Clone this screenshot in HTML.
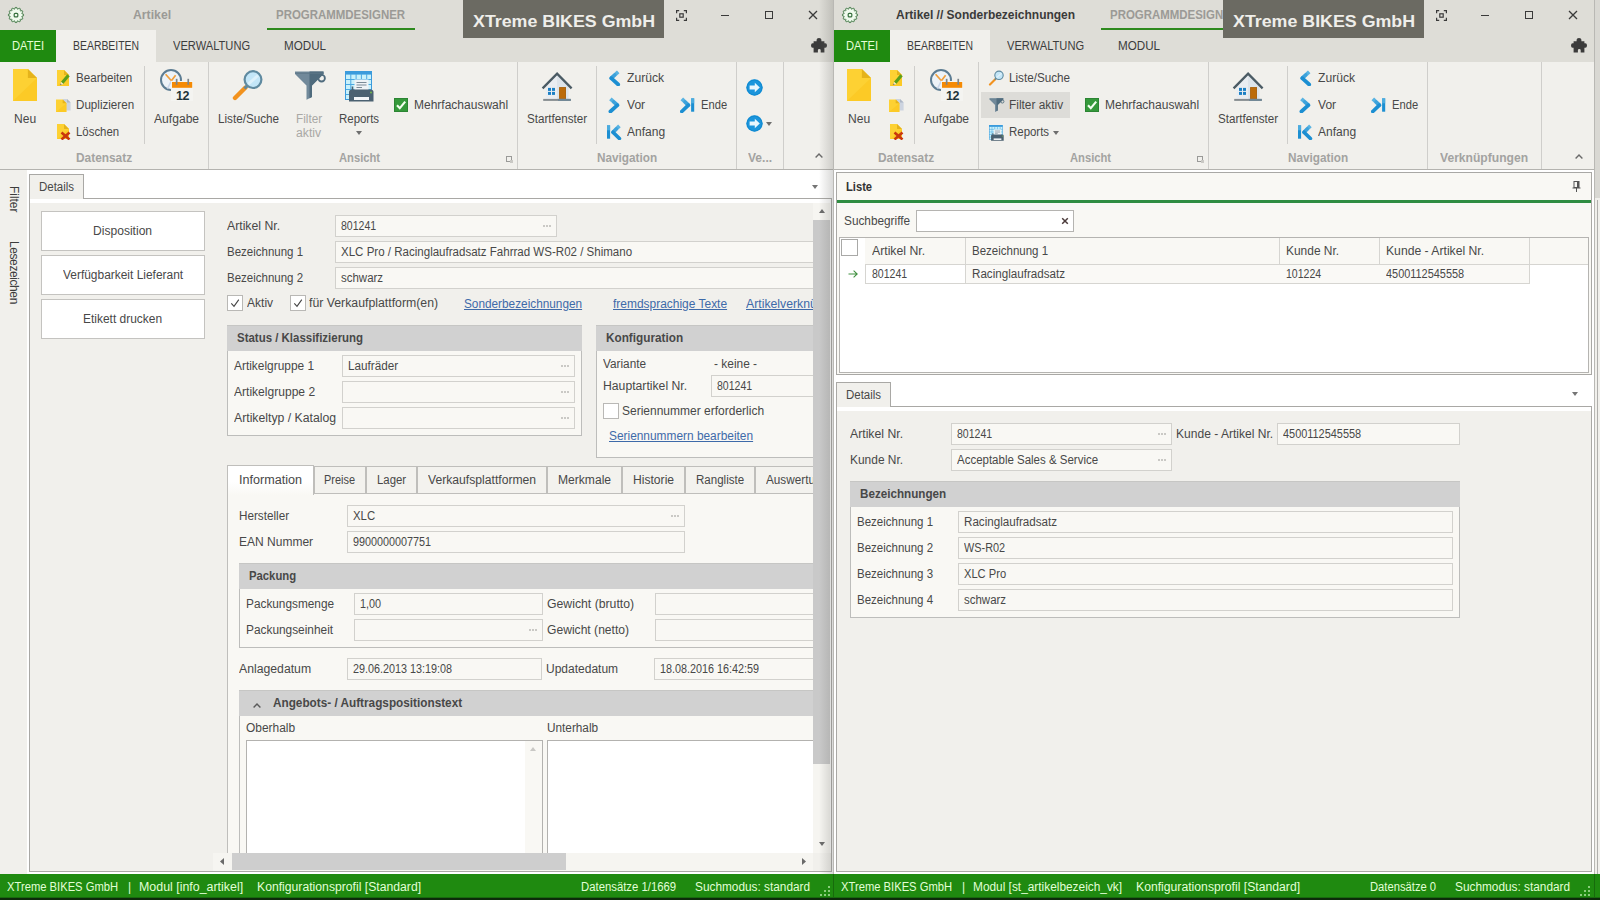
<!DOCTYPE html>
<html lang="de"><head><meta charset="utf-8"><title>XTreme BIKES GmbH - Artikel</title>
<style>
html,body{margin:0;padding:0}
body{width:1600px;height:900px;overflow:hidden;position:relative;background:#f1f0ec;font-family:"Liberation Sans",sans-serif;}
div,span.t,svg{position:absolute;box-sizing:border-box}
span.t{white-space:nowrap;}
.clip{overflow:hidden}
</style></head>
<body>
<div style="left:0px;top:0px;width:833px;height:62px;background:#deddd7;"></div>
<svg style="left:7px;top:6px" width="18" height="18" viewBox="0 0 18 18"><path d="M8.21 1.44L9.79 1.44L10.08 2.89L11.12 3.17L12.09 2.06L13.47 2.85L12.99 4.25L13.75 5.01L15.15 4.53L15.94 5.91L14.83 6.88L15.11 7.92L16.56 8.21L16.56 9.79L15.11 10.08L14.83 11.12L15.94 12.09L15.15 13.47L13.75 12.99L12.99 13.75L13.47 15.15L12.09 15.94L11.12 14.83L10.08 15.11L9.79 16.56L8.21 16.56L7.92 15.11L6.88 14.83L5.91 15.94L4.53 15.15L5.01 13.75L4.25 12.99L2.85 13.47L2.06 12.09L3.17 11.12L2.89 10.08L1.44 9.79L1.44 8.21L2.89 7.92L3.17 6.88L2.06 5.91L2.85 4.53L4.25 5.01L5.01 4.25L4.53 2.85L5.91 2.06L6.88 3.17L7.92 2.89Z" fill="#f0fbee" stroke="#3a7340" stroke-width=".9" stroke-linejoin="round"/><rect x="7.2" y="7.3" width="3.6" height="3.6" rx="1" fill="none" stroke="#356f3c" stroke-width="1.2"/></svg>
<span id="t1" class="t" style="top:6.8px;font-size:12px;line-height:16px;color:#9b9a96;font-weight:700;transform-origin:0 50%;transform:scaleX(1.0198);left:133px;">Artikel</span>
<span id="t2" class="t" style="top:6.8px;font-size:12px;line-height:16px;color:#9b9a96;font-weight:700;transform-origin:0 50%;transform:scaleX(0.9539);left:276px;">PROGRAMMDESIGNER</span>
<div style="left:267px;top:28px;width:148px;height:2px;background:#2e8a1e;"></div>
<div style="left:0px;top:30px;width:56px;height:32px;background:#1f8a10;"></div>
<span id="t3" class="t" style="top:37.5px;font-size:12px;line-height:16px;color:#e6ffd8;transform-origin:0 50%;transform:scaleX(0.9317);left:12px;">DATEI</span>
<div style="left:56px;top:30px;width:100px;height:32px;background:#f1f0ec;"></div>
<span id="t4" class="t" style="top:37.5px;font-size:12px;line-height:16px;color:#3c3c3c;transform-origin:0 50%;transform:scaleX(0.8694);left:73px;">BEARBEITEN</span>
<span id="t5" class="t" style="top:37.5px;font-size:12px;line-height:16px;color:#3c3c3c;transform-origin:0 50%;transform:scaleX(0.9275);left:173px;">VERWALTUNG</span>
<span id="t6" class="t" style="top:37.5px;font-size:12px;line-height:16px;color:#3c3c3c;transform-origin:0 50%;transform:scaleX(0.9713);left:284px;">MODUL</span>
<div style="left:463px;top:0px;width:201px;height:38px;background:#6b6a62;"></div>
<span id="t7" class="t" style="top:10.6px;font-size:16px;line-height:22px;color:#efeeea;font-weight:700;transform-origin:0 50%;transform:scaleX(1.1130);left:473px;">XTreme BIKES GmbH</span>
<svg style="left:675.5px;top:9.8px" width="11" height="11" viewBox="0 0 11 11"><path d="M0.6 3.2V0.6H3.2M7.8 0.6H10.4V3.2M10.4 7.8V10.4H7.8M3.2 10.4H0.6V7.8" fill="none" stroke="#3a3a3a" stroke-width="1.2"/><rect x="3.8" y="3.8" width="3.4" height="3.4" fill="none" stroke="#3a3a3a" stroke-width="1.2"/></svg>
<div style="left:721px;top:15px;width:8px;height:1px;background:#3a3a3a;"></div>
<div style="left:765px;top:11px;width:8px;height:8px;border:1px solid #3a3a3a;"></div>
<svg style="left:808px;top:10px" width="10" height="10" viewBox="0 0 10 10"><path d="M1 1L9 9M9 1L1 9" stroke="#3a3a3a" stroke-width="1.3"/></svg>
<svg style="left:811px;top:38px" width="16" height="15" viewBox="0 0 16 15"><path d="M5.6 3.2V1.8Q5.6 0 8 0Q10.4 0 10.4 1.8V3.2H13.4V5.3Q16 4.6 16 7.5Q16 10.4 13.4 9.7V14.6H9.7V12.2Q9.7 11 8.3 11Q6.9 11 6.9 12.2V14.6H2.6V9.7Q0 10.4 0 7.5Q0 4.6 2.6 5.3V3.2Z" fill="#3b3b3b"/></svg>
<div style="left:0px;top:62px;width:833px;height:107px;background:#f1f0ec;"></div>
<div style="left:0px;top:169px;width:833px;height:1px;background:#b4b3af;"></div>
<svg style="left:13px;top:69px" width="24" height="32" viewBox="0 0 24 32"><path d="M0 0H14.9L24 9.1V32H0Z" fill="#fdd133"/><path d="M0 32L24 9.1V32Z" fill="#fbc723" opacity=".75"/><path d="M14.9 0L24 9.1H14.9Z" fill="#e5b31b"/></svg>
<span id="t8" class="t" style="top:111px;font-size:12px;line-height:16px;color:#484848;transform-origin:0 50%;transform:scaleX(1.0038);left:14px;">Neu</span>
<svg style="left:57px;top:70px" width="14" height="16" viewBox="0 0 14 16"><path d="M0 0H7.0L12 5.0V16H0Z" fill="#fdd133"/><path d="M0 16L12 5.0V16Z" fill="#fbc723" opacity=".75"/><path d="M7.0 0L12 5.0H7.0Z" fill="#e5b31b"/><path d="M11.5 5.2L5 13" stroke="#5c9f1a" stroke-width="3.2" stroke-linecap="butt"/><path d="M3.2 15.2L4 11.8L6.6 13.9Z" fill="#f3e9c0"/><path d="M3.2 15.2L3.6 13.6L4.7 14.5Z" fill="#555"/></svg>
<span id="t9" class="t" style="top:69.6px;font-size:12px;line-height:16px;color:#484848;transform-origin:0 50%;transform:scaleX(0.9665);left:76px;">Bearbeiten</span>
<svg style="left:56px;top:99px" width="15" height="13" viewBox="0 0 15 13"><path d="M7 0H11L14.6 3.6V11.4H7Z" fill="#cdd4e0"/><path d="M11 0L14.6 3.6H11Z" fill="#aeb7c6"/><g transform="translate(0,0.6)"><path d="M0 0H6.7L10.4 3.7V12.4H0Z" fill="#fdd133"/><path d="M0 12.4L10.4 3.7V12.4Z" fill="#fbc723" opacity=".75"/><path d="M6.7 0L10.4 3.7H6.7Z" fill="#e5b31b"/></g></svg>
<span id="t10" class="t" style="top:96.6px;font-size:12px;line-height:16px;color:#484848;transform-origin:0 50%;transform:scaleX(0.9678);left:76px;">Duplizieren</span>
<svg style="left:57px;top:124px" width="14" height="16" viewBox="0 0 14 16"><path d="M0 0H7.0L12 5.0V15H0Z" fill="#fdd133"/><path d="M0 15L12 5.0V15Z" fill="#fbc723" opacity=".75"/><path d="M7.0 0L12 5.0H7.0Z" fill="#e5b31b"/><path d="M4.5 8.5L12.5 15.5M12.5 8.5L4.5 15.5" stroke="#c9370d" stroke-width="2.6"/></svg>
<span id="t11" class="t" style="top:123.6px;font-size:12px;line-height:16px;color:#484848;transform-origin:0 50%;transform:scaleX(0.9499);left:76px;">Löschen</span>
<div style="left:144px;top:66px;width:1px;height:78px;background:#cfcecb;"></div>
<svg style="left:160px;top:69px" width="33" height="32" viewBox="0 0 33 32"><circle cx="11" cy="11" r="10" fill="#edf3f8" stroke="#5d7d93" stroke-width="2"/><path d="M11.4 11.8L5.6 5.2M11.4 11.8L15.6 6.2" stroke="#f2a03c" stroke-width="1.7" fill="none"/><path d="M11.4 11.8L7.4 19.6" stroke="#c9d6ea" stroke-width="1.5"/><rect x="11" y="12" width="22" height="20" fill="#f4f4f1"/><rect x="12" y="13" width="20.2" height="5.8" fill="#f58a04"/><rect x="15.8" y="9.8" width="1.7" height="6" fill="#7d858b"/><rect x="27.4" y="9.8" width="1.7" height="6" fill="#7d858b"/><text x="22.6" y="30.7" style="font-family:Liberation Sans,sans-serif" font-weight="700" font-size="12.5" text-anchor="middle" fill="#1f3439" letter-spacing="-0.3">12</text></svg>
<span id="t12" class="t" style="top:111px;font-size:12px;line-height:16px;color:#484848;transform-origin:0 50%;transform:scaleX(1.0085);left:154px;">Aufgabe</span>
<span id="t13" class="t" style="top:149.6px;font-size:12px;line-height:16px;color:#a3a3a1;font-weight:700;transform-origin:0 50%;transform:scaleX(0.9896);left:76px;">Datensatz</span>
<div style="left:208px;top:62px;width:1px;height:107px;background:#cfcecb;"></div>
<svg style="left:231px;top:69px" width="34" height="32" viewBox="0 0 34 32"><path d="M14.5 18.5L4 29" stroke="#f2921e" stroke-width="4.4" stroke-linecap="round"/><path d="M16.5 16.5L13.5 19.5" stroke="#5f8aa0" stroke-width="3"/><circle cx="22" cy="10.6" r="8.4" fill="#c3e6f8" stroke="#5f8aa0" stroke-width="2.2"/><path d="M17.5 15L27 6.5" stroke="#e4f4fc" stroke-width="3" opacity=".8"/></svg>
<span id="t14" class="t" style="top:111px;font-size:12px;line-height:16px;color:#484848;transform-origin:0 50%;transform:scaleX(0.9742);left:218px;">Liste/Suche</span>
<svg style="left:295px;top:71px" width="31" height="29" viewBox="0 0 31 29"><circle cx="26.6" cy="7.2" r="3.3" fill="none" stroke="#4f6b7d" stroke-width="1.8"/><path d="M0 0.5H28.5V3L17 14.5V26L11.5 28.8V14.5L0 3Z" fill="#71899a"/><path d="M14.5 0.5H28.5V3L17 14.5V26L14.5 27.3Z" fill="#4f6b7d"/><path d="M0 2.2H28.5" stroke="#5d7787" stroke-width="1"/></svg>
<span id="t15" class="t" style="top:111px;font-size:12px;line-height:16px;color:#a9a8a5;transform-origin:0 50%;transform:scaleX(0.9786);left:296px;">Filter</span>
<span id="t16" class="t" style="top:125px;font-size:12px;line-height:16px;color:#a9a8a5;transform-origin:0 50%;transform:scaleX(1.0167);left:296px;">aktiv</span>
<svg style="left:345px;top:71px" width="31" height="31" viewBox="0 0 31 31"><rect x="0" y="0" width="26.5" height="28.5" fill="#c9f1fb"/><rect x="0" y="0" width="26.5" height="3.6" fill="#3b9bdc"/><path d="M5.8 3V28" stroke="#4aa9e2" stroke-width="1"/><path d="M11.1 3V28" stroke="#4aa9e2" stroke-width="1"/><path d="M16.4 3V28" stroke="#4aa9e2" stroke-width="1"/><path d="M21.7 3V28" stroke="#4aa9e2" stroke-width="1"/><path d="M0 8.5H26" stroke="#4aa9e2" stroke-width="1"/><path d="M0 13.5H26" stroke="#4aa9e2" stroke-width="1"/><path d="M0 18.5H26" stroke="#4aa9e2" stroke-width="1"/><path d="M0 23.5H26" stroke="#4aa9e2" stroke-width="1"/><rect x="0.5" y="0.5" width="26" height="28" fill="none" stroke="#3b9bdc" stroke-width="1"/><rect x="9.5" y="8.5" width="14" height="12" fill="#eef3f6"/><path d="M11.5 11.5H21.5M11.5 14H21.5M11.5 16.5H17" stroke="#7a8b97" stroke-width="1.1"/><path d="M7.5 15.5V19" stroke="#4b6171" stroke-width="1.6"/><path d="M4 21Q4 18.5 7 18.5H25.5Q28.5 18.5 28.5 21V30.5H4Z" fill="#4b6171"/><rect x="9" y="26" width="15" height="3" fill="#f2f5f7"/><circle cx="26" cy="21.5" r="1" fill="#74b84a"/></svg>
<span id="t17" class="t" style="top:111px;font-size:12px;line-height:16px;color:#484848;transform-origin:0 50%;transform:scaleX(0.9541);left:339px;">Reports</span>
<svg style="left:356.0px;top:131px" width="6" height="4" viewBox="0 0 6 4"><path d="M0 0H6L3.0 4Z" fill="#6e6e6e"/></svg>
<svg style="left:394px;top:98px" width="14" height="14" viewBox="0 0 14 14"><rect width="14" height="14" fill="#35993b"/><rect x=".5" y=".5" width="13" height="13" fill="none" stroke="#2c8533"/><path d="M3 7.2L5.8 10.2L11.2 3.6" fill="none" stroke="#f4fff0" stroke-width="2.1"/></svg>
<span id="t18" class="t" style="top:96.6px;font-size:12px;line-height:16px;color:#484848;transform-origin:0 50%;transform:scaleX(1.0004);left:414px;">Mehrfachauswahl</span>
<span id="t19" class="t" style="top:149.6px;font-size:12px;line-height:16px;color:#a3a3a1;font-weight:700;transform-origin:0 50%;transform:scaleX(0.9338);left:339px;">Ansicht</span>
<div style="left:506px;top:156px;width:6px;height:6px;border:1px solid #9a9a98;"></div>
<div style="left:510px;top:160px;width:3px;height:3px;background:#c9c8c4;"></div>
<div style="left:517px;top:62px;width:1px;height:107px;background:#cfcecb;"></div>
<svg style="left:541px;top:71px" width="32" height="31" viewBox="0 0 32 31"><path d="M4.5 13.5L16 2.6L27.5 13.5V28H4.5Z" fill="#e9edf1"/><path d="M16 2.6L27.5 13.5V28H16Z" fill="#dde4ea"/><rect x="7" y="16.9" width="3" height="3" fill="#1b7fc4"/><rect x="11" y="16.9" width="3" height="3" fill="#1b7fc4"/><rect x="7" y="20.9" width="3" height="3" fill="#1b7fc4"/><rect x="11" y="20.9" width="3" height="3" fill="#1b7fc4"/><rect x="18.2" y="16.2" width="6.8" height="11.6" fill="#bb6b0a"/><rect x="18.6" y="16.6" width="6" height="11" fill="none" stroke="#a86414" stroke-width=".8"/><rect x="2.2" y="27.9" width="27.6" height="2" fill="#858c90"/><rect x="17" y="27.9" width="12.8" height="2" fill="#6f8796"/><path d="M1.6 17.4L16.1 2.6L30.6 17.4" fill="none" stroke="#4b5b64" stroke-width="2.3" stroke-linejoin="miter"/></svg>
<span id="t20" class="t" style="top:111px;font-size:12px;line-height:16px;color:#484848;transform-origin:0 50%;transform:scaleX(0.9689);left:527px;">Startfenster</span>
<div style="left:596px;top:66px;width:1px;height:78px;background:#cfcecb;"></div>
<svg style="left:608px;top:70px" width="14" height="16" viewBox="0 0 14 16"><path d="M10.2 1.9L3.2 8.2" stroke="#58b3e2" stroke-width="3.7" fill="none"/><path d="M10.2 14.5L3.2 8.2" stroke="#1c8fd2" stroke-width="3.7" fill="none" stroke-linecap="round"/><path d="M6.699999999999999 5.05L3.2 8.2" stroke="#1c8fd2" stroke-width="3.7" fill="none" opacity=".45" stroke-linecap="round"/></svg>
<span id="t21" class="t" style="top:69.6px;font-size:12px;line-height:16px;color:#484848;transform-origin:0 50%;transform:scaleX(1.0112);left:627px;">Zurück</span>
<svg style="left:608px;top:97px" width="14" height="16" viewBox="0 0 14 16"><path d="M2.4 1.9L9.4 8.2" stroke="#58b3e2" stroke-width="3.7" fill="none"/><path d="M2.4 14.5L9.4 8.2" stroke="#1c8fd2" stroke-width="3.7" fill="none" stroke-linecap="round"/><path d="M5.9 5.05L9.4 8.2" stroke="#1c8fd2" stroke-width="3.7" fill="none" opacity=".45" stroke-linecap="round"/></svg>
<span id="t22" class="t" style="top:96.6px;font-size:12px;line-height:16px;color:#484848;transform-origin:0 50%;transform:scaleX(1.0047);left:627px;">Vor</span>
<svg style="left:607px;top:124px" width="16" height="16" viewBox="0 0 16 16"><rect x="0" y="1.3" width="3.1" height="13.4" fill="#1c8fd2"/><rect x="0" y="1.3" width="3.1" height="5" fill="#58b3e2" opacity=".8"/><path d="M12.4 1.9L6 8.2" stroke="#58b3e2" stroke-width="3.7" fill="none"/><path d="M12.4 14.5L6 8.2" stroke="#1c8fd2" stroke-width="3.7" fill="none" stroke-linecap="round"/><path d="M9.2 5.05L6 8.2" stroke="#1c8fd2" stroke-width="3.7" fill="none" opacity=".45" stroke-linecap="round"/></svg>
<span id="t23" class="t" style="top:123.6px;font-size:12px;line-height:16px;color:#484848;transform-origin:0 50%;transform:scaleX(1.0014);left:627px;">Anfang</span>
<svg style="left:680px;top:97px" width="16" height="16" viewBox="0 0 16 16"><rect x="11.1" y="1.3" width="3.1" height="13.4" fill="#1c8fd2"/><rect x="11.1" y="1.3" width="3.1" height="5" fill="#58b3e2" opacity=".8"/><path d="M1.8 1.9L8.4 8.2" stroke="#58b3e2" stroke-width="3.7" fill="none"/><path d="M1.8 14.5L8.4 8.2" stroke="#1c8fd2" stroke-width="3.7" fill="none" stroke-linecap="round"/><path d="M5.1000000000000005 5.05L8.4 8.2" stroke="#1c8fd2" stroke-width="3.7" fill="none" opacity=".45" stroke-linecap="round"/></svg>
<span id="t24" class="t" style="top:96.6px;font-size:12px;line-height:16px;color:#484848;transform-origin:0 50%;transform:scaleX(0.9311);left:701px;">Ende</span>
<span id="t25" class="t" style="top:149.6px;font-size:12px;line-height:16px;color:#a3a3a1;font-weight:700;transform-origin:0 50%;transform:scaleX(0.9797);left:597px;">Navigation</span>
<div style="left:736px;top:62px;width:1px;height:107px;background:#cfcecb;"></div>
<svg style="left:746px;top:79px" width="17" height="17" viewBox="0 0 17 17"><circle cx="8.5" cy="8.5" r="8.2" fill="#1b95dc"/><circle cx="8.5" cy="8.5" r="7.4" fill="none" stroke="#128ad0" stroke-width="1"/><path d="M3.6 6.6H8.8V3.8L13.8 8.5L8.8 13.2V10.4H3.6Z" fill="#e9f6fd"/></svg>
<svg style="left:746px;top:115px" width="17" height="17" viewBox="0 0 17 17"><circle cx="8.5" cy="8.5" r="8.2" fill="#1b95dc"/><circle cx="8.5" cy="8.5" r="7.4" fill="none" stroke="#128ad0" stroke-width="1"/><path d="M3.6 6.6H8.8V3.8L13.8 8.5L8.8 13.2V10.4H3.6Z" fill="#e9f6fd"/></svg>
<svg style="left:766.0px;top:121.5px" width="6" height="4" viewBox="0 0 6 4"><path d="M0 0H6L3.0 4Z" fill="#6e6e6e"/></svg>
<span id="t26" class="t" style="top:149.6px;font-size:12px;line-height:16px;color:#a3a3a1;font-weight:700;transform-origin:0 50%;transform:scaleX(1.0029);left:748px;">Ve...</span>
<div style="left:783px;top:62px;width:1px;height:107px;background:#cfcecb;"></div>
<svg style="left:815px;top:153px" width="8" height="5" viewBox="0 0 8 5"><path d="M0.6 4.4L4 1L7.4 4.4" fill="none" stroke="#6a6a6a" stroke-width="1.4"/></svg>
<div style="left:0px;top:170px;width:833px;height:704px;background:#ffffff;"></div>
<div style="left:0px;top:170px;width:27px;height:704px;background:#f1f0ec;"></div>
<span id="t27" class="t" style="top:-8px;font-size:12px;line-height:16px;color:#3c3c3c;letter-spacing:-0.045px;left:0px;left:22px;top:186px;transform-origin:0 0;transform:rotate(90deg);">Filter</span>
<span id="t28" class="t" style="top:-8px;font-size:12px;line-height:16px;color:#3c3c3c;letter-spacing:-0.408px;left:0px;left:22px;top:241px;transform-origin:0 0;transform:rotate(90deg);">Lesezeichen</span>
<div style="left:29px;top:198px;width:803px;height:674px;background:#ffffff;border:1px solid #a9a8a5;"></div>
<div style="left:29px;top:174px;width:55px;height:25px;background:#f1f0ec;border:1px solid #a9a8a5;border-bottom:none;"></div>
<span id="t29" class="t" style="top:178.6px;font-size:12px;line-height:16px;color:#484848;transform-origin:0 50%;transform:scaleX(0.9567);left:39px;">Details</span>
<svg style="left:812.0px;top:184.5px" width="6" height="4" viewBox="0 0 6 4"><path d="M0 0H6L3.0 4Z" fill="#757575"/></svg>
<div style="left:30px;top:203px;width:783px;height:650px;background:#f1f0ec;"></div>
<div style="left:813px;top:203px;width:17px;height:650px;background:#f6f5f1;"></div>
<svg style="left:818.5px;top:209px" width="6" height="4" viewBox="0 0 6 4"><path d="M0 4H6L3.0 0Z" fill="#6a6a6a"/></svg>
<div style="left:813px;top:220px;width:17px;height:544px;background:#c9c9c9;"></div>
<svg style="left:818.5px;top:842px" width="6" height="4" viewBox="0 0 6 4"><path d="M0 0H6L3.0 4Z" fill="#6a6a6a"/></svg>
<div style="left:213px;top:853px;width:600px;height:18px;background:#f6f5f1;"></div>
<div style="left:30px;top:853px;width:183px;height:18px;background:#f1f0ec;"></div>
<svg style="left:220px;top:858.0px" width="4" height="7" viewBox="0 0 4 7"><path d="M4 0V7L0 3.5Z" fill="#6a6a6a"/></svg>
<svg style="left:802px;top:858.0px" width="4" height="7" viewBox="0 0 4 7"><path d="M0 0V7L4 3.5Z" fill="#6a6a6a"/></svg>
<div style="left:232px;top:853px;width:334px;height:17px;background:#cecece;"></div>
<div style="left:813px;top:853px;width:18px;height:18px;background:#f1f0ec;"></div>
<div class="clip" style="left:30px;top:203px;width:783px;height:650px"><div style="left:-30px;top:-203px;width:1600px;height:900px">
<div style="left:41px;top:211px;width:164px;height:40px;background:#ffffff;border:1px solid #c4c3c0;"></div>
<span id="t30" class="t" style="top:223px;font-size:12px;line-height:16px;color:#484848;transform-origin:0 50%;transform:scaleX(1.0068);left:93px;">Disposition</span>
<div style="left:41px;top:255px;width:164px;height:40px;background:#ffffff;border:1px solid #c4c3c0;"></div>
<span id="t31" class="t" style="top:267px;font-size:12px;line-height:16px;color:#484848;transform-origin:0 50%;transform:scaleX(0.9946);left:63px;">Verfügbarkeit Lieferant</span>
<div style="left:41px;top:299px;width:164px;height:40px;background:#ffffff;border:1px solid #c4c3c0;"></div>
<span id="t32" class="t" style="top:311px;font-size:12px;line-height:16px;color:#484848;transform-origin:0 50%;transform:scaleX(0.9965);left:83px;">Etikett drucken</span>
<span id="t33" class="t" style="top:217.6px;font-size:12px;line-height:16px;color:#484848;transform-origin:0 50%;transform:scaleX(1.0208);left:227px;">Artikel Nr.</span>
<div style="left:335px;top:215px;width:222px;height:22px;background:#f9f8f4;border:1px solid #d2d1cd;"></div>
<div style="left:543px;top:225px;width:2px;height:2px;background:#cac9c5;"></div>
<div style="left:546px;top:225px;width:2px;height:2px;background:#cac9c5;"></div>
<div style="left:549px;top:225px;width:2px;height:2px;background:#cac9c5;"></div>
<span id="t34" class="t" style="top:217.5px;font-size:12px;line-height:16px;color:#484848;transform-origin:0 50%;transform:scaleX(0.8765);left:341px;">801241</span>
<span id="t35" class="t" style="top:243.6px;font-size:12px;line-height:16px;color:#484848;transform-origin:0 50%;transform:scaleX(0.9584);left:227px;">Bezeichnung 1</span>
<div style="left:335px;top:241px;width:500px;height:22px;background:#f9f8f4;border:1px solid #d2d1cd;"></div>
<span id="t36" class="t" style="top:243.5px;font-size:12px;line-height:16px;color:#484848;transform-origin:0 50%;transform:scaleX(0.9614);left:341px;">XLC Pro / Racinglaufradsatz Fahrrad WS-R02 / Shimano</span>
<span id="t37" class="t" style="top:269.6px;font-size:12px;line-height:16px;color:#484848;transform-origin:0 50%;transform:scaleX(0.9584);left:227px;">Bezeichnung 2</span>
<div style="left:335px;top:267px;width:500px;height:22px;background:#f9f8f4;border:1px solid #d2d1cd;"></div>
<span id="t38" class="t" style="top:269.5px;font-size:12px;line-height:16px;color:#484848;transform-origin:0 50%;transform:scaleX(0.9565);left:341px;">schwarz</span>
<div style="left:227px;top:295px;width:16px;height:16px;background:#fff;border:1px solid #b9b8b5;"></div>
<svg style="left:230px;top:298px" width="10" height="10" viewBox="0 0 10 10"><path d="M1.3 5.4L4 8.3L8.8 1.6" fill="none" stroke="#444" stroke-width="1.1"/></svg>
<span id="t39" class="t" style="top:294.6px;font-size:12px;line-height:16px;color:#484848;transform-origin:0 50%;transform:scaleX(1.0032);left:247px;">Aktiv</span>
<div style="left:290px;top:295px;width:16px;height:16px;background:#fff;border:1px solid #b9b8b5;"></div>
<svg style="left:293px;top:298px" width="10" height="10" viewBox="0 0 10 10"><path d="M1.3 5.4L4 8.3L8.8 1.6" fill="none" stroke="#444" stroke-width="1.1"/></svg>
<span id="t40" class="t" style="top:294.6px;font-size:12px;line-height:16px;color:#484848;transform-origin:0 50%;transform:scaleX(1.0241);left:309px;">für Verkaufplattform(en)</span>
<span id="t41" class="t" style="top:295.6px;font-size:12px;line-height:16px;color:#3e6aa9;text-decoration:underline;transform-origin:0 50%;transform:scaleX(0.9833);left:464px;">Sonderbezeichnungen</span>
<span id="t42" class="t" style="top:295.6px;font-size:12px;line-height:16px;color:#3e6aa9;text-decoration:underline;transform-origin:0 50%;transform:scaleX(0.9964);left:613px;">fremdsprachige Texte</span>
<span id="t43" class="t" style="top:295.6px;font-size:12px;line-height:16px;color:#3e6aa9;text-decoration:underline;transform-origin:0 50%;transform:scaleX(1.0210);left:746px;">Artikelverknüpfungen</span>
<div style="left:227px;top:325px;width:355px;height:111px;background:#f9f8f4;border:1px solid #bdbdbb;"></div>
<div style="left:227px;top:325px;width:355px;height:26px;background:#d1d1d1;border-top:1px solid #c6c6c4;"></div>
<span id="t44" class="t" style="top:330px;font-size:12px;line-height:16px;color:#484848;font-weight:700;transform-origin:0 50%;transform:scaleX(0.9551);left:237px;">Status / Klassifizierung</span>
<span id="t45" class="t" style="top:357.6px;font-size:12px;line-height:16px;color:#484848;transform-origin:0 50%;transform:scaleX(0.9923);left:234px;">Artikelgruppe 1</span>
<div style="left:342px;top:355px;width:233px;height:22px;background:#f9f8f4;border:1px solid #d2d1cd;"></div>
<div style="left:561px;top:365px;width:2px;height:2px;background:#cac9c5;"></div>
<div style="left:564px;top:365px;width:2px;height:2px;background:#cac9c5;"></div>
<div style="left:567px;top:365px;width:2px;height:2px;background:#cac9c5;"></div>
<span id="t46" class="t" style="top:357.5px;font-size:12px;line-height:16px;color:#484848;transform-origin:0 50%;transform:scaleX(0.9752);left:348px;">Laufräder</span>
<span id="t47" class="t" style="top:383.6px;font-size:12px;line-height:16px;color:#484848;transform-origin:0 50%;transform:scaleX(1.0047);left:234px;">Artikelgruppe 2</span>
<div style="left:342px;top:381px;width:233px;height:22px;background:#f9f8f4;border:1px solid #d2d1cd;"></div>
<div style="left:561px;top:391px;width:2px;height:2px;background:#cac9c5;"></div>
<div style="left:564px;top:391px;width:2px;height:2px;background:#cac9c5;"></div>
<div style="left:567px;top:391px;width:2px;height:2px;background:#cac9c5;"></div>
<span id="t48" class="t" style="top:409.6px;font-size:12px;line-height:16px;color:#484848;transform-origin:0 50%;transform:scaleX(1.0204);left:234px;">Artikeltyp / Katalog</span>
<div style="left:342px;top:407px;width:233px;height:22px;background:#f9f8f4;border:1px solid #d2d1cd;"></div>
<div style="left:561px;top:417px;width:2px;height:2px;background:#cac9c5;"></div>
<div style="left:564px;top:417px;width:2px;height:2px;background:#cac9c5;"></div>
<div style="left:567px;top:417px;width:2px;height:2px;background:#cac9c5;"></div>
<div style="left:596px;top:325px;width:300px;height:133px;background:#f9f8f4;border:1px solid #bdbdbb;"></div>
<div style="left:596px;top:325px;width:300px;height:26px;background:#d1d1d1;border-top:1px solid #c6c6c4;"></div>
<span id="t49" class="t" style="top:330px;font-size:12px;line-height:16px;color:#484848;font-weight:700;transform-origin:0 50%;transform:scaleX(0.9802);left:606px;">Konfiguration</span>
<span id="t50" class="t" style="top:355.6px;font-size:12px;line-height:16px;color:#484848;transform-origin:0 50%;transform:scaleX(0.9837);left:603px;">Variante</span>
<span id="t51" class="t" style="top:355.6px;font-size:12px;line-height:16px;color:#484848;transform-origin:0 50%;transform:scaleX(0.9940);left:714px;">- keine -</span>
<span id="t52" class="t" style="top:377.6px;font-size:12px;line-height:16px;color:#484848;transform-origin:0 50%;transform:scaleX(1.0169);left:603px;">Hauptartikel Nr.</span>
<div style="left:711px;top:375px;width:150px;height:22px;background:#f9f8f4;border:1px solid #d2d1cd;"></div>
<span id="t53" class="t" style="top:377.5px;font-size:12px;line-height:16px;color:#484848;transform-origin:0 50%;transform:scaleX(0.8765);left:717px;">801241</span>
<div style="left:603px;top:403px;width:16px;height:16px;background:#fff;border:1px solid #b9b8b5;"></div>
<span id="t54" class="t" style="top:402.6px;font-size:12px;line-height:16px;color:#484848;transform-origin:0 50%;transform:scaleX(1.0003);left:622px;">Seriennummer erforderlich</span>
<span id="t55" class="t" style="top:427.6px;font-size:12px;line-height:16px;color:#3e6aa9;text-decoration:underline;transform-origin:0 50%;transform:scaleX(0.9909);left:609px;">Seriennummern bearbeiten</span>
<div style="left:227px;top:493px;width:700px;height:400px;background:#f9f8f4;border:1px solid #bfbebb;"></div>
<div style="left:314px;top:466px;width:52px;height:28px;background:#f3f2ee;border:1px solid #bfbebb;"></div>
<span id="t56" class="t" style="top:471.6px;font-size:12px;line-height:16px;color:#484848;transform-origin:0 50%;transform:scaleX(0.9143);left:324px;">Preise</span>
<div style="left:366px;top:466px;width:51px;height:28px;background:#f3f2ee;border:1px solid #bfbebb;"></div>
<span id="t57" class="t" style="top:471.6px;font-size:12px;line-height:16px;color:#484848;transform-origin:0 50%;transform:scaleX(0.9478);left:377px;">Lager</span>
<div style="left:417px;top:466px;width:130px;height:28px;background:#f3f2ee;border:1px solid #bfbebb;"></div>
<span id="t58" class="t" style="top:471.6px;font-size:12px;line-height:16px;color:#484848;transform-origin:0 50%;transform:scaleX(1.0128);left:428px;">Verkaufsplattformen</span>
<div style="left:547px;top:466px;width:75px;height:28px;background:#f3f2ee;border:1px solid #bfbebb;"></div>
<span id="t59" class="t" style="top:471.6px;font-size:12px;line-height:16px;color:#484848;transform-origin:0 50%;transform:scaleX(1.0078);left:558px;">Merkmale</span>
<div style="left:622px;top:466px;width:63px;height:28px;background:#f3f2ee;border:1px solid #bfbebb;"></div>
<span id="t60" class="t" style="top:471.6px;font-size:12px;line-height:16px;color:#484848;transform-origin:0 50%;transform:scaleX(1.0101);left:633px;">Historie</span>
<div style="left:685px;top:466px;width:70px;height:28px;background:#f3f2ee;border:1px solid #bfbebb;"></div>
<span id="t61" class="t" style="top:471.6px;font-size:12px;line-height:16px;color:#484848;transform-origin:0 50%;transform:scaleX(0.9614);left:696px;">Rangliste</span>
<div style="left:755px;top:466px;width:96px;height:28px;background:#f3f2ee;border:1px solid #bfbebb;"></div>
<span id="t62" class="t" style="top:471.6px;font-size:12px;line-height:16px;color:#484848;transform-origin:0 50%;transform:scaleX(0.9789);left:766px;">Auswertungen</span>
<div style="left:227px;top:465px;width:87px;height:30px;border:1px solid #bfbebb;border-bottom:none;background:linear-gradient(#ffffff 55%,#f9f8f4);"></div>
<span id="t63" class="t" style="top:471.6px;font-size:12px;line-height:16px;color:#484848;transform-origin:0 50%;transform:scaleX(1.0511);left:239px;">Information</span>
<span id="t64" class="t" style="top:507.6px;font-size:12px;line-height:16px;color:#484848;transform-origin:0 50%;transform:scaleX(0.9755);left:239px;">Hersteller</span>
<div style="left:347px;top:505px;width:338px;height:22px;background:#f9f8f4;border:1px solid #d2d1cd;"></div>
<div style="left:671px;top:515px;width:2px;height:2px;background:#cac9c5;"></div>
<div style="left:674px;top:515px;width:2px;height:2px;background:#cac9c5;"></div>
<div style="left:677px;top:515px;width:2px;height:2px;background:#cac9c5;"></div>
<span id="t65" class="t" style="top:507.5px;font-size:12px;line-height:16px;color:#484848;transform-origin:0 50%;transform:scaleX(0.9467);left:353px;">XLC</span>
<span id="t66" class="t" style="top:533.6px;font-size:12px;line-height:16px;color:#484848;transform-origin:0 50%;transform:scaleX(1.0011);left:239px;">EAN Nummer</span>
<div style="left:347px;top:531px;width:338px;height:22px;background:#f9f8f4;border:1px solid #d2d1cd;"></div>
<span id="t67" class="t" style="top:533.5px;font-size:12px;line-height:16px;color:#484848;transform-origin:0 50%;transform:scaleX(0.9001);left:353px;">9900000007751</span>
<div style="left:239px;top:563px;width:650px;height:85px;background:#f9f8f4;border:1px solid #bdbdbb;"></div>
<div style="left:239px;top:563px;width:650px;height:26px;background:#d1d1d1;border-top:1px solid #c6c6c4;"></div>
<span id="t68" class="t" style="top:568px;font-size:12px;line-height:16px;color:#484848;font-weight:700;transform-origin:0 50%;transform:scaleX(0.9417);left:249px;">Packung</span>
<span id="t69" class="t" style="top:595.6px;font-size:12px;line-height:16px;color:#484848;transform-origin:0 50%;transform:scaleX(0.9856);left:246px;">Packungsmenge</span>
<div style="left:354px;top:593px;width:189px;height:22px;background:#f9f8f4;border:1px solid #d2d1cd;"></div>
<span id="t70" class="t" style="top:595.5px;font-size:12px;line-height:16px;color:#484848;transform-origin:0 50%;transform:scaleX(0.9033);left:360px;">1,00</span>
<span id="t71" class="t" style="top:621.6px;font-size:12px;line-height:16px;color:#484848;transform-origin:0 50%;transform:scaleX(0.9891);left:246px;">Packungseinheit</span>
<div style="left:354px;top:619px;width:189px;height:22px;background:#f9f8f4;border:1px solid #d2d1cd;"></div>
<div style="left:529px;top:629px;width:2px;height:2px;background:#cac9c5;"></div>
<div style="left:532px;top:629px;width:2px;height:2px;background:#cac9c5;"></div>
<div style="left:535px;top:629px;width:2px;height:2px;background:#cac9c5;"></div>
<span id="t72" class="t" style="top:595.6px;font-size:12px;line-height:16px;color:#484848;transform-origin:0 50%;transform:scaleX(1.0204);left:547px;">Gewicht (brutto)</span>
<div style="left:655px;top:593px;width:200px;height:22px;background:#f9f8f4;border:1px solid #d2d1cd;"></div>
<span id="t73" class="t" style="top:621.6px;font-size:12px;line-height:16px;color:#484848;transform-origin:0 50%;transform:scaleX(1.0089);left:547px;">Gewicht (netto)</span>
<div style="left:655px;top:619px;width:200px;height:22px;background:#f9f8f4;border:1px solid #d2d1cd;"></div>
<span id="t74" class="t" style="top:660.6px;font-size:12px;line-height:16px;color:#484848;transform-origin:0 50%;transform:scaleX(1.0195);left:239px;">Anlagedatum</span>
<div style="left:347px;top:658px;width:195px;height:22px;background:#f9f8f4;border:1px solid #d2d1cd;"></div>
<span id="t75" class="t" style="top:660.5px;font-size:12px;line-height:16px;color:#484848;transform-origin:0 50%;transform:scaleX(0.9000);left:353px;">29.06.2013 13:19:08</span>
<span id="t76" class="t" style="top:660.6px;font-size:12px;line-height:16px;color:#484848;transform-origin:0 50%;transform:scaleX(1.0007);left:546px;">Updatedatum</span>
<div style="left:654px;top:658px;width:200px;height:22px;background:#f9f8f4;border:1px solid #d2d1cd;"></div>
<span id="t77" class="t" style="top:660.5px;font-size:12px;line-height:16px;color:#484848;transform-origin:0 50%;transform:scaleX(0.9000);left:660px;">18.08.2016 16:42:59</span>
<div style="left:239px;top:690px;width:650px;height:200px;background:#f9f8f4;border:1px solid #bdbdbb;"></div>
<div style="left:239px;top:690px;width:650px;height:26px;background:#d1d1d1;border-top:1px solid #c6c6c4;"></div>
<span id="t78" class="t" style="top:695px;font-size:12px;line-height:16px;color:#484848;font-weight:700;transform-origin:0 50%;transform:scaleX(0.9803);left:273px;">Angebots- / Auftragspositionstext</span>
<svg style="left:252.5px;top:702.5px" width="8" height="5" viewBox="0 0 8 5"><path d="M0.6 4.4L4 1L7.4 4.4" fill="none" stroke="#5a5a5a" stroke-width="1.4"/></svg>
<span id="t79" class="t" style="top:719.6px;font-size:12px;line-height:16px;color:#484848;transform-origin:0 50%;transform:scaleX(0.9944);left:246px;">Oberhalb</span>
<div style="left:246px;top:740px;width:297px;height:140px;background:#ffffff;border:1px solid #b3b2af;"></div>
<div style="left:525px;top:741px;width:17px;height:138px;background:#f9f8f4;"></div>
<svg style="left:530.0px;top:747px" width="6" height="4" viewBox="0 0 6 4"><path d="M0 4H6L3.0 0Z" fill="#c9c8c5"/></svg>
<span id="t80" class="t" style="top:719.6px;font-size:12px;line-height:16px;color:#484848;transform-origin:0 50%;transform:scaleX(0.9821);left:547px;">Unterhalb</span>
<div style="left:547px;top:740px;width:297px;height:140px;background:#ffffff;border:1px solid #b3b2af;"></div>
</div></div>
<div style="left:819px;top:0px;width:14px;height:874px;background:linear-gradient(90deg,rgba(110,110,105,0),rgba(110,110,105,.26));"></div>
<div style="left:833px;top:0px;width:1px;height:900px;background:#b9b8b4;"></div>
<div style="left:834px;top:0px;width:761px;height:62px;background:#deddd7;"></div>
<div style="left:834px;top:0px;width:759px;height:62px;background:#deddd7;"></div>
<svg style="left:841px;top:6px" width="18" height="18" viewBox="0 0 18 18"><path d="M8.21 1.44L9.79 1.44L10.08 2.89L11.12 3.17L12.09 2.06L13.47 2.85L12.99 4.25L13.75 5.01L15.15 4.53L15.94 5.91L14.83 6.88L15.11 7.92L16.56 8.21L16.56 9.79L15.11 10.08L14.83 11.12L15.94 12.09L15.15 13.47L13.75 12.99L12.99 13.75L13.47 15.15L12.09 15.94L11.12 14.83L10.08 15.11L9.79 16.56L8.21 16.56L7.92 15.11L6.88 14.83L5.91 15.94L4.53 15.15L5.01 13.75L4.25 12.99L2.85 13.47L2.06 12.09L3.17 11.12L2.89 10.08L1.44 9.79L1.44 8.21L2.89 7.92L3.17 6.88L2.06 5.91L2.85 4.53L4.25 5.01L5.01 4.25L4.53 2.85L5.91 2.06L6.88 3.17L7.92 2.89Z" fill="#f0fbee" stroke="#3a7340" stroke-width=".9" stroke-linejoin="round"/><rect x="7.2" y="7.3" width="3.6" height="3.6" rx="1" fill="none" stroke="#356f3c" stroke-width="1.2"/></svg>
<span id="t81" class="t" style="top:6.8px;font-size:12px;line-height:16px;color:#3a3a3a;font-weight:700;transform-origin:0 50%;transform:scaleX(0.9985);left:896px;">Artikel // Sonderbezeichnungen</span>
<span id="t82" class="t" style="top:6.8px;font-size:12px;line-height:16px;color:#9b9a96;font-weight:700;transform-origin:0 50%;transform:scaleX(0.9539);left:1110px;">PROGRAMMDESIGNER</span>
<div style="left:1101px;top:28px;width:148px;height:2px;background:#2e8a1e;"></div>
<div style="left:834px;top:30px;width:56px;height:32px;background:#1f8a10;"></div>
<span id="t83" class="t" style="top:37.5px;font-size:12px;line-height:16px;color:#e6ffd8;transform-origin:0 50%;transform:scaleX(0.9317);left:846px;">DATEI</span>
<div style="left:890px;top:30px;width:100px;height:32px;background:#f1f0ec;"></div>
<span id="t84" class="t" style="top:37.5px;font-size:12px;line-height:16px;color:#3c3c3c;transform-origin:0 50%;transform:scaleX(0.8694);left:907px;">BEARBEITEN</span>
<span id="t85" class="t" style="top:37.5px;font-size:12px;line-height:16px;color:#3c3c3c;transform-origin:0 50%;transform:scaleX(0.9275);left:1007px;">VERWALTUNG</span>
<span id="t86" class="t" style="top:37.5px;font-size:12px;line-height:16px;color:#3c3c3c;transform-origin:0 50%;transform:scaleX(0.9713);left:1118px;">MODUL</span>
<div style="left:1223px;top:0px;width:201px;height:38px;background:#6b6a62;"></div>
<span id="t87" class="t" style="top:10.6px;font-size:16px;line-height:22px;color:#efeeea;font-weight:700;transform-origin:0 50%;transform:scaleX(1.1130);left:1233px;">XTreme BIKES GmbH</span>
<svg style="left:1435.5px;top:9.8px" width="11" height="11" viewBox="0 0 11 11"><path d="M0.6 3.2V0.6H3.2M7.8 0.6H10.4V3.2M10.4 7.8V10.4H7.8M3.2 10.4H0.6V7.8" fill="none" stroke="#3a3a3a" stroke-width="1.2"/><rect x="3.8" y="3.8" width="3.4" height="3.4" fill="none" stroke="#3a3a3a" stroke-width="1.2"/></svg>
<div style="left:1481px;top:15px;width:8px;height:1px;background:#3a3a3a;"></div>
<div style="left:1525px;top:11px;width:8px;height:8px;border:1px solid #3a3a3a;"></div>
<svg style="left:1568px;top:10px" width="10" height="10" viewBox="0 0 10 10"><path d="M1 1L9 9M9 1L1 9" stroke="#3a3a3a" stroke-width="1.3"/></svg>
<svg style="left:1571px;top:38px" width="16" height="15" viewBox="0 0 16 15"><path d="M5.6 3.2V1.8Q5.6 0 8 0Q10.4 0 10.4 1.8V3.2H13.4V5.3Q16 4.6 16 7.5Q16 10.4 13.4 9.7V14.6H9.7V12.2Q9.7 11 8.3 11Q6.9 11 6.9 12.2V14.6H2.6V9.7Q0 10.4 0 7.5Q0 4.6 2.6 5.3V3.2Z" fill="#3b3b3b"/></svg>
<div style="left:834px;top:62px;width:761px;height:107px;background:#f1f0ec;"></div>
<div style="left:834px;top:169px;width:761px;height:1px;background:#b4b3af;"></div>
<svg style="left:847px;top:69px" width="24" height="32" viewBox="0 0 24 32"><path d="M0 0H14.9L24 9.1V32H0Z" fill="#fdd133"/><path d="M0 32L24 9.1V32Z" fill="#fbc723" opacity=".75"/><path d="M14.9 0L24 9.1H14.9Z" fill="#e5b31b"/></svg>
<span id="t88" class="t" style="top:111px;font-size:12px;line-height:16px;color:#484848;transform-origin:0 50%;transform:scaleX(1.0038);left:848px;">Neu</span>
<svg style="left:890px;top:70px" width="14" height="16" viewBox="0 0 14 16"><path d="M0 0H7.0L12 5.0V16H0Z" fill="#fdd133"/><path d="M0 16L12 5.0V16Z" fill="#fbc723" opacity=".75"/><path d="M7.0 0L12 5.0H7.0Z" fill="#e5b31b"/><path d="M11.5 5.2L5 13" stroke="#5c9f1a" stroke-width="3.2" stroke-linecap="butt"/><path d="M3.2 15.2L4 11.8L6.6 13.9Z" fill="#f3e9c0"/><path d="M3.2 15.2L3.6 13.6L4.7 14.5Z" fill="#555"/></svg>
<svg style="left:889px;top:99px" width="15" height="13" viewBox="0 0 15 13"><path d="M7 0H11L14.6 3.6V11.4H7Z" fill="#cdd4e0"/><path d="M11 0L14.6 3.6H11Z" fill="#aeb7c6"/><g transform="translate(0,0.6)"><path d="M0 0H6.7L10.4 3.7V12.4H0Z" fill="#fdd133"/><path d="M0 12.4L10.4 3.7V12.4Z" fill="#fbc723" opacity=".75"/><path d="M6.7 0L10.4 3.7H6.7Z" fill="#e5b31b"/></g></svg>
<svg style="left:890px;top:124px" width="14" height="16" viewBox="0 0 14 16"><path d="M0 0H7.0L12 5.0V15H0Z" fill="#fdd133"/><path d="M0 15L12 5.0V15Z" fill="#fbc723" opacity=".75"/><path d="M7.0 0L12 5.0H7.0Z" fill="#e5b31b"/><path d="M4.5 8.5L12.5 15.5M12.5 8.5L4.5 15.5" stroke="#c9370d" stroke-width="2.6"/></svg>
<div style="left:914px;top:66px;width:1px;height:78px;background:#cfcecb;"></div>
<svg style="left:930px;top:69px" width="33" height="32" viewBox="0 0 33 32"><circle cx="11" cy="11" r="10" fill="#edf3f8" stroke="#5d7d93" stroke-width="2"/><path d="M11.4 11.8L5.6 5.2M11.4 11.8L15.6 6.2" stroke="#f2a03c" stroke-width="1.7" fill="none"/><path d="M11.4 11.8L7.4 19.6" stroke="#c9d6ea" stroke-width="1.5"/><rect x="11" y="12" width="22" height="20" fill="#f4f4f1"/><rect x="12" y="13" width="20.2" height="5.8" fill="#f58a04"/><rect x="15.8" y="9.8" width="1.7" height="6" fill="#7d858b"/><rect x="27.4" y="9.8" width="1.7" height="6" fill="#7d858b"/><text x="22.6" y="30.7" style="font-family:Liberation Sans,sans-serif" font-weight="700" font-size="12.5" text-anchor="middle" fill="#1f3439" letter-spacing="-0.3">12</text></svg>
<span id="t89" class="t" style="top:111px;font-size:12px;line-height:16px;color:#484848;transform-origin:0 50%;transform:scaleX(1.0085);left:924px;">Aufgabe</span>
<span id="t90" class="t" style="top:149.6px;font-size:12px;line-height:16px;color:#a3a3a1;font-weight:700;transform-origin:0 50%;transform:scaleX(0.9896);left:878px;">Datensatz</span>
<div style="left:978px;top:62px;width:1px;height:107px;background:#cfcecb;"></div>
<svg style="left:988px;top:70px" width="17" height="16" viewBox="0 0 34 32"><path d="M14.5 18.5L4 29" stroke="#f2921e" stroke-width="4.4" stroke-linecap="round"/><path d="M16.5 16.5L13.5 19.5" stroke="#5f8aa0" stroke-width="3"/><circle cx="22" cy="10.6" r="8.4" fill="#c3e6f8" stroke="#5f8aa0" stroke-width="2.2"/><path d="M17.5 15L27 6.5" stroke="#e4f4fc" stroke-width="3" opacity=".8"/></svg>
<span id="t91" class="t" style="top:69.6px;font-size:12px;line-height:16px;color:#484848;transform-origin:0 50%;transform:scaleX(0.9742);left:1009px;">Liste/Suche</span>
<div style="left:981px;top:92px;width:89px;height:26px;background:#dddcd8;"></div>
<svg style="left:989px;top:98px" width="16" height="14" viewBox="0 0 31 29"><circle cx="26.6" cy="7.2" r="3.3" fill="none" stroke="#4f6b7d" stroke-width="1.8"/><path d="M0 0.5H28.5V3L17 14.5V26L11.5 28.8V14.5L0 3Z" fill="#71899a"/><path d="M14.5 0.5H28.5V3L17 14.5V26L14.5 27.3Z" fill="#4f6b7d"/><path d="M0 2.2H28.5" stroke="#5d7787" stroke-width="1"/></svg>
<span id="t92" class="t" style="top:96.6px;font-size:12px;line-height:16px;color:#484848;transform-origin:0 50%;transform:scaleX(0.9893);left:1009px;">Filter aktiv</span>
<svg style="left:989px;top:124.5px" width="16" height="16" viewBox="0 0 31 31"><rect x="0" y="0" width="26.5" height="28.5" fill="#c9f1fb"/><rect x="0" y="0" width="26.5" height="3.6" fill="#3b9bdc"/><path d="M5.8 3V28" stroke="#4aa9e2" stroke-width="1"/><path d="M11.1 3V28" stroke="#4aa9e2" stroke-width="1"/><path d="M16.4 3V28" stroke="#4aa9e2" stroke-width="1"/><path d="M21.7 3V28" stroke="#4aa9e2" stroke-width="1"/><path d="M0 8.5H26" stroke="#4aa9e2" stroke-width="1"/><path d="M0 13.5H26" stroke="#4aa9e2" stroke-width="1"/><path d="M0 18.5H26" stroke="#4aa9e2" stroke-width="1"/><path d="M0 23.5H26" stroke="#4aa9e2" stroke-width="1"/><rect x="0.5" y="0.5" width="26" height="28" fill="none" stroke="#3b9bdc" stroke-width="1"/><rect x="9.5" y="8.5" width="14" height="12" fill="#eef3f6"/><path d="M11.5 11.5H21.5M11.5 14H21.5M11.5 16.5H17" stroke="#7a8b97" stroke-width="1.1"/><path d="M7.5 15.5V19" stroke="#4b6171" stroke-width="1.6"/><path d="M4 21Q4 18.5 7 18.5H25.5Q28.5 18.5 28.5 21V30.5H4Z" fill="#4b6171"/><rect x="9" y="26" width="15" height="3" fill="#f2f5f7"/><circle cx="26" cy="21.5" r="1" fill="#74b84a"/></svg>
<span id="t93" class="t" style="top:123.6px;font-size:12px;line-height:16px;color:#484848;transform-origin:0 50%;transform:scaleX(0.9541);left:1009px;">Reports</span>
<svg style="left:1053.0px;top:130.5px" width="6" height="4" viewBox="0 0 6 4"><path d="M0 0H6L3.0 4Z" fill="#6e6e6e"/></svg>
<svg style="left:1085px;top:98px" width="14" height="14" viewBox="0 0 14 14"><rect width="14" height="14" fill="#35993b"/><rect x=".5" y=".5" width="13" height="13" fill="none" stroke="#2c8533"/><path d="M3 7.2L5.8 10.2L11.2 3.6" fill="none" stroke="#f4fff0" stroke-width="2.1"/></svg>
<span id="t94" class="t" style="top:96.6px;font-size:12px;line-height:16px;color:#484848;transform-origin:0 50%;transform:scaleX(1.0004);left:1105px;">Mehrfachauswahl</span>
<span id="t95" class="t" style="top:149.6px;font-size:12px;line-height:16px;color:#a3a3a1;font-weight:700;transform-origin:0 50%;transform:scaleX(0.9338);left:1070px;">Ansicht</span>
<div style="left:1197px;top:156px;width:6px;height:6px;border:1px solid #9a9a98;"></div>
<div style="left:1201px;top:160px;width:3px;height:3px;background:#c9c8c4;"></div>
<div style="left:1208px;top:62px;width:1px;height:107px;background:#cfcecb;"></div>
<svg style="left:1232px;top:71px" width="32" height="31" viewBox="0 0 32 31"><path d="M4.5 13.5L16 2.6L27.5 13.5V28H4.5Z" fill="#e9edf1"/><path d="M16 2.6L27.5 13.5V28H16Z" fill="#dde4ea"/><rect x="7" y="16.9" width="3" height="3" fill="#1b7fc4"/><rect x="11" y="16.9" width="3" height="3" fill="#1b7fc4"/><rect x="7" y="20.9" width="3" height="3" fill="#1b7fc4"/><rect x="11" y="20.9" width="3" height="3" fill="#1b7fc4"/><rect x="18.2" y="16.2" width="6.8" height="11.6" fill="#bb6b0a"/><rect x="18.6" y="16.6" width="6" height="11" fill="none" stroke="#a86414" stroke-width=".8"/><rect x="2.2" y="27.9" width="27.6" height="2" fill="#858c90"/><rect x="17" y="27.9" width="12.8" height="2" fill="#6f8796"/><path d="M1.6 17.4L16.1 2.6L30.6 17.4" fill="none" stroke="#4b5b64" stroke-width="2.3" stroke-linejoin="miter"/></svg>
<span id="t96" class="t" style="top:111px;font-size:12px;line-height:16px;color:#484848;transform-origin:0 50%;transform:scaleX(0.9689);left:1218px;">Startfenster</span>
<div style="left:1287px;top:66px;width:1px;height:78px;background:#cfcecb;"></div>
<svg style="left:1299px;top:70px" width="14" height="16" viewBox="0 0 14 16"><path d="M10.2 1.9L3.2 8.2" stroke="#58b3e2" stroke-width="3.7" fill="none"/><path d="M10.2 14.5L3.2 8.2" stroke="#1c8fd2" stroke-width="3.7" fill="none" stroke-linecap="round"/><path d="M6.699999999999999 5.05L3.2 8.2" stroke="#1c8fd2" stroke-width="3.7" fill="none" opacity=".45" stroke-linecap="round"/></svg>
<span id="t97" class="t" style="top:69.6px;font-size:12px;line-height:16px;color:#484848;transform-origin:0 50%;transform:scaleX(1.0112);left:1318px;">Zurück</span>
<svg style="left:1299px;top:97px" width="14" height="16" viewBox="0 0 14 16"><path d="M2.4 1.9L9.4 8.2" stroke="#58b3e2" stroke-width="3.7" fill="none"/><path d="M2.4 14.5L9.4 8.2" stroke="#1c8fd2" stroke-width="3.7" fill="none" stroke-linecap="round"/><path d="M5.9 5.05L9.4 8.2" stroke="#1c8fd2" stroke-width="3.7" fill="none" opacity=".45" stroke-linecap="round"/></svg>
<span id="t98" class="t" style="top:96.6px;font-size:12px;line-height:16px;color:#484848;transform-origin:0 50%;transform:scaleX(1.0047);left:1318px;">Vor</span>
<svg style="left:1298px;top:124px" width="16" height="16" viewBox="0 0 16 16"><rect x="0" y="1.3" width="3.1" height="13.4" fill="#1c8fd2"/><rect x="0" y="1.3" width="3.1" height="5" fill="#58b3e2" opacity=".8"/><path d="M12.4 1.9L6 8.2" stroke="#58b3e2" stroke-width="3.7" fill="none"/><path d="M12.4 14.5L6 8.2" stroke="#1c8fd2" stroke-width="3.7" fill="none" stroke-linecap="round"/><path d="M9.2 5.05L6 8.2" stroke="#1c8fd2" stroke-width="3.7" fill="none" opacity=".45" stroke-linecap="round"/></svg>
<span id="t99" class="t" style="top:123.6px;font-size:12px;line-height:16px;color:#484848;transform-origin:0 50%;transform:scaleX(1.0014);left:1318px;">Anfang</span>
<svg style="left:1371px;top:97px" width="16" height="16" viewBox="0 0 16 16"><rect x="11.1" y="1.3" width="3.1" height="13.4" fill="#1c8fd2"/><rect x="11.1" y="1.3" width="3.1" height="5" fill="#58b3e2" opacity=".8"/><path d="M1.8 1.9L8.4 8.2" stroke="#58b3e2" stroke-width="3.7" fill="none"/><path d="M1.8 14.5L8.4 8.2" stroke="#1c8fd2" stroke-width="3.7" fill="none" stroke-linecap="round"/><path d="M5.1000000000000005 5.05L8.4 8.2" stroke="#1c8fd2" stroke-width="3.7" fill="none" opacity=".45" stroke-linecap="round"/></svg>
<span id="t100" class="t" style="top:96.6px;font-size:12px;line-height:16px;color:#484848;transform-origin:0 50%;transform:scaleX(0.9311);left:1392px;">Ende</span>
<span id="t101" class="t" style="top:149.6px;font-size:12px;line-height:16px;color:#a3a3a1;font-weight:700;transform-origin:0 50%;transform:scaleX(0.9797);left:1288px;">Navigation</span>
<div style="left:1427px;top:62px;width:1px;height:107px;background:#cfcecb;"></div>
<span id="t102" class="t" style="top:149.6px;font-size:12px;line-height:16px;color:#a3a3a1;font-weight:700;transform-origin:0 50%;transform:scaleX(1.0087);left:1440px;">Verknüpfungen</span>
<div style="left:1541px;top:62px;width:1px;height:107px;background:#cfcecb;"></div>
<svg style="left:1575px;top:154px" width="8" height="5" viewBox="0 0 8 5"><path d="M0.6 4.4L4 1L7.4 4.4" fill="none" stroke="#6a6a6a" stroke-width="1.4"/></svg>
<div style="left:834px;top:170px;width:761px;height:704px;background:#ffffff;"></div>
<div style="left:836px;top:172px;width:756px;height:203px;background:#f9f8f4;border:1px solid #a9a8a5;"></div>
<span id="t103" class="t" style="top:178.6px;font-size:12px;line-height:16px;color:#333;font-weight:700;transform-origin:0 50%;transform:scaleX(0.9316);left:846px;">Liste</span>
<div style="left:837px;top:200px;width:754px;height:3px;background:#2f8d42;"></div>
<svg style="left:1572px;top:181px" width="9" height="11" viewBox="0 0 9 11"><rect x="2" y="0.5" width="5" height="6" fill="none" stroke="#555" stroke-width="1"/><rect x="5" y="1" width="2" height="5" fill="#555"/><path d="M0.5 7H8.5M4.5 7V11" stroke="#555" stroke-width="1"/></svg>
<span id="t104" class="t" style="top:212.6px;font-size:12px;line-height:16px;color:#484848;transform-origin:0 50%;transform:scaleX(0.9840);left:844px;">Suchbegriffe</span>
<div style="left:916px;top:210px;width:158px;height:22px;background:#ffffff;border:1px solid #b5b4b1;"></div>
<svg style="left:1061px;top:217px" width="8" height="8" viewBox="0 0 8 8"><path d="M1.2 1.2L6.8 6.8M6.8 1.2L1.2 6.8" stroke="#4a3a3a" stroke-width="1.5"/></svg>
<div style="left:839px;top:237px;width:750px;height:136px;background:#ffffff;border:1px solid #b5b4b1;"></div>
<div style="left:840px;top:238px;width:748px;height:26px;background:#f9f8f4;"></div>
<div style="left:865px;top:264px;width:723px;height:1px;background:#d6d5d1;"></div>
<div style="left:840px;top:238px;width:25px;height:27px;background:#ffffff;"></div>
<div style="left:841px;top:239px;width:17px;height:17px;background:#fff;border:1px solid #a9a9a7;"></div>
<div style="left:865px;top:264px;width:1px;height:20px;background:#d6d5d1;"></div>
<div style="left:965px;top:238px;width:1px;height:46px;background:#d6d5d1;"></div>
<div style="left:1279px;top:238px;width:1px;height:46px;background:#d6d5d1;"></div>
<div style="left:1379px;top:238px;width:1px;height:46px;background:#d6d5d1;"></div>
<div style="left:1529px;top:238px;width:1px;height:46px;background:#d6d5d1;"></div>
<div style="left:966px;top:265px;width:563px;height:18px;background:#faf9f6;"></div>
<div style="left:865px;top:283px;width:665px;height:1px;background:#d6d5d1;"></div>
<span id="t105" class="t" style="top:242.6px;font-size:12px;line-height:16px;color:#484848;transform-origin:0 50%;transform:scaleX(1.0208);left:872px;">Artikel Nr.</span>
<span id="t106" class="t" style="top:242.6px;font-size:12px;line-height:16px;color:#484848;transform-origin:0 50%;transform:scaleX(0.9584);left:972px;">Bezeichnung 1</span>
<span id="t107" class="t" style="top:242.6px;font-size:12px;line-height:16px;color:#484848;transform-origin:0 50%;transform:scaleX(0.9948);left:1286px;">Kunde Nr.</span>
<span id="t108" class="t" style="top:242.6px;font-size:12px;line-height:16px;color:#484848;transform-origin:0 50%;transform:scaleX(1.0143);left:1386px;">Kunde - Artikel Nr.</span>
<span id="t109" class="t" style="top:265.6px;font-size:12px;line-height:16px;color:#484848;transform-origin:0 50%;transform:scaleX(0.8765);left:872px;">801241</span>
<span id="t110" class="t" style="top:265.6px;font-size:12px;line-height:16px;color:#484848;transform-origin:0 50%;transform:scaleX(0.9692);left:972px;">Racinglaufradsatz</span>
<span id="t111" class="t" style="top:265.6px;font-size:12px;line-height:16px;color:#484848;transform-origin:0 50%;transform:scaleX(0.8765);left:1286px;">101224</span>
<span id="t112" class="t" style="top:265.6px;font-size:12px;line-height:16px;color:#484848;transform-origin:0 50%;transform:scaleX(0.9095);left:1386px;">4500112545558</span>
<svg style="left:847.5px;top:269.4px" width="11" height="10" viewBox="0 0 11 10"><path d="M0.5 5H9M5.6 1.6L9.2 5L5.6 8.4" fill="none" stroke="#3f8f3f" stroke-width="1.05"/></svg>
<div style="left:836px;top:406px;width:756px;height:466px;background:#ffffff;border:1px solid #a9a8a5;"></div>
<div style="left:836px;top:382px;width:55px;height:25px;background:#f1f0ec;border:1px solid #a9a8a5;border-bottom:none;"></div>
<span id="t113" class="t" style="top:386.6px;font-size:12px;line-height:16px;color:#484848;transform-origin:0 50%;transform:scaleX(0.9567);left:846px;">Details</span>
<svg style="left:1572.0px;top:391.5px" width="6" height="4" viewBox="0 0 6 4"><path d="M0 0H6L3.0 4Z" fill="#757575"/></svg>
<div style="left:837px;top:411px;width:754px;height:460px;background:#f1f0ec;"></div>
<span id="t114" class="t" style="top:425.6px;font-size:12px;line-height:16px;color:#484848;transform-origin:0 50%;transform:scaleX(1.0208);left:850px;">Artikel Nr.</span>
<div style="left:951px;top:423px;width:221px;height:22px;background:#f9f8f4;border:1px solid #d2d1cd;"></div>
<div style="left:1158px;top:433px;width:2px;height:2px;background:#cac9c5;"></div>
<div style="left:1161px;top:433px;width:2px;height:2px;background:#cac9c5;"></div>
<div style="left:1164px;top:433px;width:2px;height:2px;background:#cac9c5;"></div>
<span id="t115" class="t" style="top:425.5px;font-size:12px;line-height:16px;color:#484848;transform-origin:0 50%;transform:scaleX(0.8765);left:957px;">801241</span>
<span id="t116" class="t" style="top:425.6px;font-size:12px;line-height:16px;color:#484848;transform-origin:0 50%;transform:scaleX(1.0039);left:1176px;">Kunde - Artikel Nr.</span>
<div style="left:1277px;top:423px;width:183px;height:22px;background:#f9f8f4;border:1px solid #d2d1cd;"></div>
<span id="t117" class="t" style="top:425.5px;font-size:12px;line-height:16px;color:#484848;transform-origin:0 50%;transform:scaleX(0.9095);left:1283px;">4500112545558</span>
<span id="t118" class="t" style="top:451.6px;font-size:12px;line-height:16px;color:#484848;transform-origin:0 50%;transform:scaleX(0.9948);left:850px;">Kunde Nr.</span>
<div style="left:951px;top:449px;width:221px;height:22px;background:#f9f8f4;border:1px solid #d2d1cd;"></div>
<div style="left:1158px;top:459px;width:2px;height:2px;background:#cac9c5;"></div>
<div style="left:1161px;top:459px;width:2px;height:2px;background:#cac9c5;"></div>
<div style="left:1164px;top:459px;width:2px;height:2px;background:#cac9c5;"></div>
<span id="t119" class="t" style="top:451.5px;font-size:12px;line-height:16px;color:#484848;transform-origin:0 50%;transform:scaleX(0.9571);left:957px;">Acceptable Sales &amp; Service</span>
<div style="left:850px;top:481px;width:610px;height:137px;background:#f9f8f4;border:1px solid #bdbdbb;"></div>
<div style="left:850px;top:481px;width:610px;height:26px;background:#d1d1d1;border-top:1px solid #c6c6c4;"></div>
<span id="t120" class="t" style="top:486px;font-size:12px;line-height:16px;color:#484848;font-weight:700;transform-origin:0 50%;transform:scaleX(0.9708);left:860px;">Bezeichnungen</span>
<span id="t121" class="t" style="top:513.6px;font-size:12px;line-height:16px;color:#484848;transform-origin:0 50%;transform:scaleX(0.9584);left:857px;">Bezeichnung 1</span>
<div style="left:958px;top:511px;width:495px;height:22px;background:#f9f8f4;border:1px solid #d2d1cd;"></div>
<span id="t122" class="t" style="top:513.5px;font-size:12px;line-height:16px;color:#484848;transform-origin:0 50%;transform:scaleX(0.9692);left:964px;">Racinglaufradsatz</span>
<span id="t123" class="t" style="top:539.6px;font-size:12px;line-height:16px;color:#484848;transform-origin:0 50%;transform:scaleX(0.9584);left:857px;">Bezeichnung 2</span>
<div style="left:958px;top:537px;width:495px;height:22px;background:#f9f8f4;border:1px solid #d2d1cd;"></div>
<span id="t124" class="t" style="top:539.5px;font-size:12px;line-height:16px;color:#484848;transform-origin:0 50%;transform:scaleX(0.9064);left:964px;">WS-R02</span>
<span id="t125" class="t" style="top:565.6px;font-size:12px;line-height:16px;color:#484848;transform-origin:0 50%;transform:scaleX(0.9584);left:857px;">Bezeichnung 3</span>
<div style="left:958px;top:563px;width:495px;height:22px;background:#f9f8f4;border:1px solid #d2d1cd;"></div>
<span id="t126" class="t" style="top:565.5px;font-size:12px;line-height:16px;color:#484848;transform-origin:0 50%;transform:scaleX(0.9281);left:964px;">XLC Pro</span>
<span id="t127" class="t" style="top:591.6px;font-size:12px;line-height:16px;color:#484848;transform-origin:0 50%;transform:scaleX(0.9584);left:857px;">Bezeichnung 4</span>
<div style="left:958px;top:589px;width:495px;height:22px;background:#f9f8f4;border:1px solid #d2d1cd;"></div>
<span id="t128" class="t" style="top:591.5px;font-size:12px;line-height:16px;color:#484848;transform-origin:0 50%;transform:scaleX(0.9565);left:964px;">schwarz</span>
<div style="left:1595px;top:0px;width:5px;height:900px;background:#d9d8d3;"></div>
<div style="left:1595px;top:198px;width:5px;height:676px;background:#f1f0ec;"></div>
<div style="left:1594px;top:0px;width:1px;height:874px;background:#b9b8b4;"></div>
<div style="left:1597px;top:200px;width:1px;height:674px;background:#b0afac;"></div>
<div style="left:0px;top:874px;width:1600px;height:24px;background:#1f8a10;"></div>
<div style="left:0px;top:898px;width:1600px;height:2px;background:#0c2a0a;"></div>
<div style="left:0px;top:897px;width:1600px;height:1px;background:#186a0e;"></div>
<div style="left:833px;top:874px;width:1px;height:24px;background:#176b0c;"></div>
<div style="left:1594px;top:874px;width:1px;height:24px;background:#176b0c;"></div>
<span id="t129" class="t" style="top:878.6px;font-size:12px;line-height:16px;color:#e2ffd6;transform-origin:0 50%;transform:scaleX(0.9342);left:7px;">XTreme BIKES GmbH</span>
<span id="t130" class="t" style="top:878.6px;font-size:12px;line-height:16px;color:#e2ffd6;left:128px;">|</span>
<span id="t131" class="t" style="top:878.6px;font-size:12px;line-height:16px;color:#e2ffd6;transform-origin:0 50%;transform:scaleX(1.0336);left:139px;">Modul [info_artikel]</span>
<span id="t132" class="t" style="top:878.6px;font-size:12px;line-height:16px;color:#e2ffd6;transform-origin:0 50%;transform:scaleX(1.0165);left:257px;">Konfigurationsprofil [Standard]</span>
<span id="t133" class="t" style="top:878.6px;font-size:12px;line-height:16px;color:#e2ffd6;transform-origin:0 50%;transform:scaleX(0.9439);left:581px;">Datensätze 1/1669</span>
<span id="t134" class="t" style="top:878.6px;font-size:12px;line-height:16px;color:#e2ffd6;transform-origin:0 50%;transform:scaleX(0.9859);left:695px;">Suchmodus: standard</span>
<span id="t135" class="t" style="top:878.6px;font-size:12px;line-height:16px;color:#e2ffd6;transform-origin:0 50%;transform:scaleX(0.9342);left:841px;">XTreme BIKES GmbH</span>
<span id="t136" class="t" style="top:878.6px;font-size:12px;line-height:16px;color:#e2ffd6;left:962px;">|</span>
<span id="t137" class="t" style="top:878.6px;font-size:12px;line-height:16px;color:#e2ffd6;transform-origin:0 50%;transform:scaleX(0.9891);left:973px;">Modul [st_artikelbezeich_vk]</span>
<span id="t138" class="t" style="top:878.6px;font-size:12px;line-height:16px;color:#e2ffd6;transform-origin:0 50%;transform:scaleX(1.0165);left:1136px;">Konfigurationsprofil [Standard]</span>
<span id="t139" class="t" style="top:878.6px;font-size:12px;line-height:16px;color:#e2ffd6;transform-origin:0 50%;transform:scaleX(0.9347);left:1370px;">Datensätze 0</span>
<span id="t140" class="t" style="top:878.6px;font-size:12px;line-height:16px;color:#e2ffd6;transform-origin:0 50%;transform:scaleX(0.9859);left:1455px;">Suchmodus: standard</span>
<div style="left:828px;top:886px;width:2px;height:2px;background:#8ace7c;"></div>
<div style="left:824px;top:890px;width:2px;height:2px;background:#8ace7c;"></div>
<div style="left:828px;top:890px;width:2px;height:2px;background:#8ace7c;"></div>
<div style="left:820px;top:894px;width:2px;height:2px;background:#8ace7c;"></div>
<div style="left:824px;top:894px;width:2px;height:2px;background:#8ace7c;"></div>
<div style="left:828px;top:894px;width:2px;height:2px;background:#8ace7c;"></div>
<div style="left:1588px;top:886px;width:2px;height:2px;background:#8ace7c;"></div>
<div style="left:1584px;top:890px;width:2px;height:2px;background:#8ace7c;"></div>
<div style="left:1588px;top:890px;width:2px;height:2px;background:#8ace7c;"></div>
<div style="left:1580px;top:894px;width:2px;height:2px;background:#8ace7c;"></div>
<div style="left:1584px;top:894px;width:2px;height:2px;background:#8ace7c;"></div>
<div style="left:1588px;top:894px;width:2px;height:2px;background:#8ace7c;"></div>
</body></html>
